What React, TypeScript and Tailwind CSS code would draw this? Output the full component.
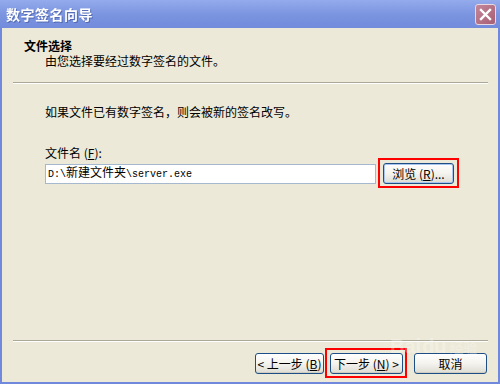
import React from 'react';

const cjk = { fontFamily: '"Noto Sans CJK SC", "DejaVu Sans", sans-serif' };
const mono = { fontFamily: '"Liberation Mono", "Noto Sans CJK SC", monospace' };

const XpButton: React.FC<{ w: string; children: React.ReactNode; focus?: boolean }> = ({ w, children, focus }) => (
  <button
    className={`${w} h-[21px] rounded-[3px] border border-[#1d4f86] bg-gradient-to-b from-[#ffffff] via-[#f4f3ee] to-[#dedcd3] text-[12px] leading-none text-black flex items-center justify-center ${
      focus ? 'shadow-[inset_0_0_0_1px_#a9c4ef]' : 'shadow-[inset_0_-1px_0_#cfcdc2]'
    }`}
    style={cjk}
  >
    {children}
  </button>
);

export default function App() {
  return (
    <div className="w-[500px] h-[384px] flex flex-col bg-[#7189dc]" style={cjk}>
      {/* Title bar */}
      <div className="h-[28px] flex items-center justify-between pl-[6px] pr-[4px] bg-gradient-to-b from-[#94abec] via-[#7c95e0] to-[#728bdb]">
        <span className="text-[14px] font-bold text-white tracking-[0.5px] drop-shadow-[1px_1px_0_rgba(60,80,150,0.6)]">
          数字签名向导
        </span>
        <div className="w-[21px] h-[21px] rounded-[3px] border border-[#e9d8e0] bg-gradient-to-br from-[#c4869a] to-[#a75f74] flex items-center justify-center">
          <svg width="13" height="13" viewBox="0 0 13 13">
            <path d="M2 2 L11 11 M11 2 L2 11" stroke="white" strokeWidth="2.4" strokeLinecap="square" />
          </svg>
        </div>
      </div>

      {/* Body */}
      <div className="flex-1 flex flex-col mx-[2px] mb-[2px] bg-[#ece9d8] relative">
        {/* Header */}
        <div className="h-[54px] pt-[10px] pl-[22px] text-[12px] leading-[15px] text-black">
          <div className="font-bold">文件选择</div>
          <div className="pl-[21px]">由您选择要经过数字签名的文件。</div>
        </div>
        <div className="ml-[11px] mr-[10px] h-[2px] border-t border-[#aca899] border-b border-b-white" />

        {/* Content */}
        <div className="pl-[43px] pt-[20px] text-[12px] leading-[16px] text-black">
          <div>如果文件已有数字签名，则会被新的签名改写。</div>
          <div className="mt-[25px]">
            文件名 (<u>F</u>):
          </div>
          <div className="mt-[2px] flex items-center gap-[7px]">
            <div className="w-[331px] h-[20px] border border-[#a5b8cd] bg-white flex items-center pl-[2px]">
              <span className="text-[10px]" style={mono}>
                D:\<span className="text-[12px]" style={cjk}>新建文件夹</span>\server.exe
              </span>
            </div>
            <div className="relative">
              <XpButton w="w-[71px]" focus>
                浏览 (<u>R</u>)...
              </XpButton>
              <div className="absolute -left-[5px] -right-[5px] -top-[5px] -bottom-[4px] border-2 border-[#ff0000]" />
            </div>
          </div>
        </div>

        <div className="flex-1" />

        {/* Bottom separator */}
        <div className="ml-[11px] mr-[10px] h-[2px] border-t border-[#aca899] border-b border-b-white" />

        <div className="flex justify-end items-center pt-[11px] pb-[8px] pr-[11px]">
          <XpButton w="w-[69px]">
            &lt; 上一步 (<u>B</u>)
          </XpButton>
          <div className="relative ml-[6px]">
            <XpButton w="w-[73px]">
              下一步 (<u>N</u>) &gt;
            </XpButton>
            <div className="absolute -left-[5px] -right-[4px] -top-[5px] -bottom-[4px] border-2 border-[#ff0000]" />
          </div>
          <div className="ml-[11px]">
            <XpButton w="w-[73px]">取消</XpButton>
          </div>
        </div>

        {/* Watermark */}
        <div className="absolute left-[388px] top-[308px] flex items-end gap-[1px] text-white/30 pointer-events-none">
          <span className="text-[20px] font-bold leading-none" style={{ fontFamily: '"Liberation Sans", sans-serif' }}>Bai</span>
          <span className="text-[20px] font-bold leading-none" style={{ fontFamily: '"Liberation Sans", sans-serif' }}>du</span>
          <span className="text-[14px] leading-none mb-[2px] ml-[2px]">经验</span>
        </div>
      </div>
    </div>
  );
}
